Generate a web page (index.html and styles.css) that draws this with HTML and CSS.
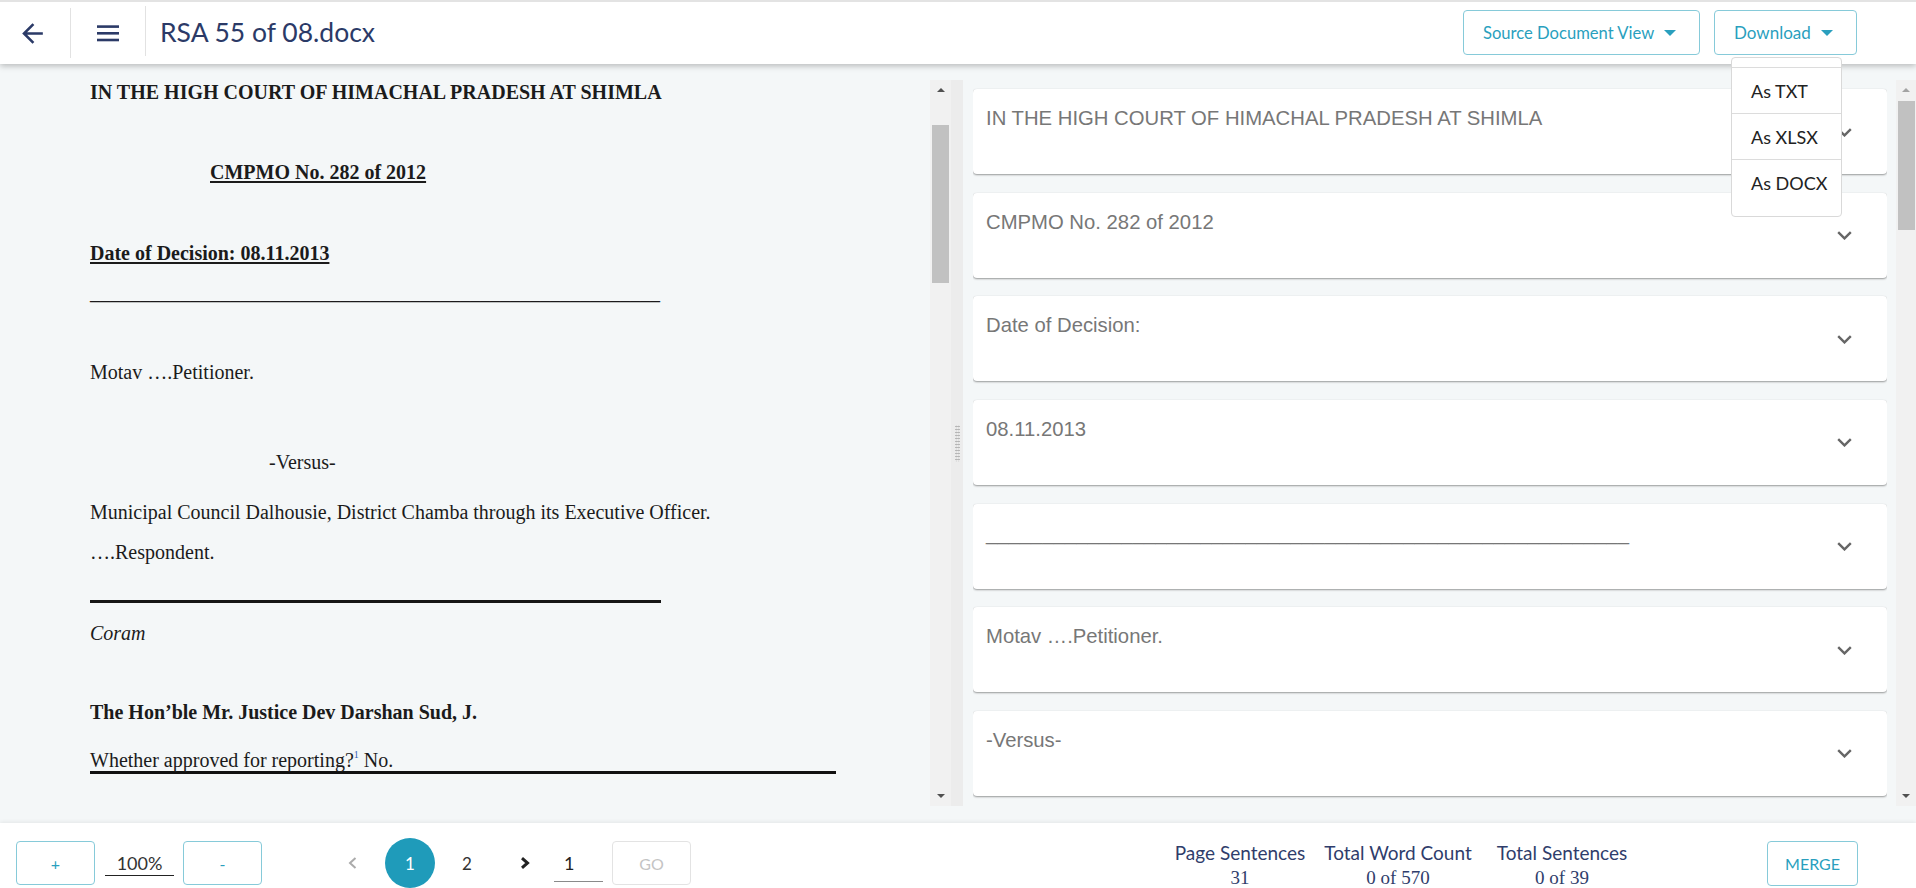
FILE: index.html
```html
<!DOCTYPE html>
<html lang="en">
<head>
<meta charset="utf-8">
<title>RSA 55 of 08.docx</title>
<link rel="stylesheet" href="styles.css">
</head>
<body>
<header class="topbar">
  <button class="icon-btn back-btn" aria-label="Back">
    <svg width="31" height="31" viewBox="0 0 24 24"><path d="M20 11H7.83l5.59-5.59L12 4l-8 8 8 8 1.41-1.41L7.83 13H20v-2z" fill="#2b3a67"/></svg>
  </button>
  <span class="vsep"></span>
  <button class="icon-btn menu-btn" aria-label="Menu">
    <svg width="22" height="17" viewBox="0 0 22 17"><rect x="0" y="0.3" width="22" height="2.6" fill="#2b3a67"/><rect x="0" y="7" width="22" height="2.6" fill="#2b3a67"/><rect x="0" y="13.7" width="22" height="2.6" fill="#2b3a67"/></svg>
  </button>
  <span class="vsep vsep-2"></span>
  <h1 class="doc-title">RSA 55 of 08.docx</h1>
  <div class="topbar-spacer"></div>
  <button class="outline-btn view-btn">Source Document View
    <svg class="caret" width="12" height="6" viewBox="0 0 12 6"><polygon points="0,0 12,0 6,6" fill="#2a9fbe"/></svg>
  </button>
  <div class="download-wrap">
    <button class="outline-btn download-btn">Download
      <svg class="caret" width="12" height="6" viewBox="0 0 12 6"><polygon points="0,0 12,0 6,6" fill="#2a9fbe"/></svg>
    </button>
    <ul class="download-menu">
      <li>As TXT</li>
      <li>As XLSX</li>
      <li>As DOCX</li>
    </ul>
  </div>
</header>

<main class="workspace">
  <section class="doc-pane">
    <div class="doc-scroll">
      <article class="doc">
        <p class="b p-first">IN THE HIGH COURT OF HIMACHAL PRADESH AT SHIMLA</p>
        <p class="b u p-case">CMPMO No. 282 of 2012</p>
        <p class="b u p-date">Date of Decision: 08.11.2013</p>
        <p class="p-rule">_________________________________________________________</p>
        <p class="p-motav">Motav ….Petitioner.</p>
        <p class="p-versus">-Versus-</p>
        <p class="p-muni">Municipal Council Dalhousie, District Chamba through its Executive Officer.</p>
        <p class="p-resp">….Respondent.</p>
        <div class="thick-rule"></div>
        <p class="i p-coram">Coram</p>
        <p class="b p-judge">The Hon’ble Mr. Justice Dev Darshan Sud, J.</p>
        <p class="p-whether">Whether approved for reporting?<sup class="fn">1</sup> No.</p>
      </article>
    </div>
    <div class="scrollbar">
      <div class="sb-btn"><span class="tri-up"></span></div>
      <div class="sb-track">
        <div class="sb-thumb" style="margin-top:25px;height:158px"></div>
      </div>
      <div class="sb-btn"><span class="tri-down"></span></div>
    </div>
  </section>

  <div class="splitter"><span class="grip"></span></div>

  <section class="sent-pane">
    <div class="cards">
      <div class="card"><span class="card-text">IN THE HIGH COURT OF HIMACHAL PRADESH AT SHIMLA</span><svg class="chev" width="15" height="9" viewBox="0 0 15 9"><polyline points="1.2,1.2 7.5,7.4 13.8,1.2" fill="none" stroke="#666" stroke-width="2.4"/></svg></div>
      <div class="card"><span class="card-text">CMPMO No. 282 of 2012</span><svg class="chev" width="15" height="9" viewBox="0 0 15 9"><polyline points="1.2,1.2 7.5,7.4 13.8,1.2" fill="none" stroke="#666" stroke-width="2.4"/></svg></div>
      <div class="card"><span class="card-text">Date of Decision:</span><svg class="chev" width="15" height="9" viewBox="0 0 15 9"><polyline points="1.2,1.2 7.5,7.4 13.8,1.2" fill="none" stroke="#666" stroke-width="2.4"/></svg></div>
      <div class="card"><span class="card-text">08.11.2013</span><svg class="chev" width="15" height="9" viewBox="0 0 15 9"><polyline points="1.2,1.2 7.5,7.4 13.8,1.2" fill="none" stroke="#666" stroke-width="2.4"/></svg></div>
      <div class="card"><span class="card-text">_________________________________________________________</span><svg class="chev" width="15" height="9" viewBox="0 0 15 9"><polyline points="1.2,1.2 7.5,7.4 13.8,1.2" fill="none" stroke="#666" stroke-width="2.4"/></svg></div>
      <div class="card"><span class="card-text">Motav ….Petitioner.</span><svg class="chev" width="15" height="9" viewBox="0 0 15 9"><polyline points="1.2,1.2 7.5,7.4 13.8,1.2" fill="none" stroke="#666" stroke-width="2.4"/></svg></div>
      <div class="card"><span class="card-text">-Versus-</span><svg class="chev" width="15" height="9" viewBox="0 0 15 9"><polyline points="1.2,1.2 7.5,7.4 13.8,1.2" fill="none" stroke="#666" stroke-width="2.4"/></svg></div>
    </div>
    <div class="scrollbar scrollbar-right">
      <div class="sb-btn"><span class="tri-up light"></span></div>
      <div class="sb-track">
        <div class="sb-thumb" style="margin-top:1px;height:129px"></div>
      </div>
      <div class="sb-btn"><span class="tri-down"></span></div>
    </div>
  </section>
</main>

<footer class="bottombar">
  <button class="outline-btn zoom-btn">+</button>
  <span class="zoom-value">100%</span>
  <button class="outline-btn zoom-btn zoom-minus">-</button>

  <button class="page-arrow prev" aria-label="Previous">
    <svg width="9" height="12" viewBox="0 0 9 12"><polyline points="7.5,1 2,6 7.5,11" fill="none" stroke="#ababab" stroke-width="2"/></svg>
  </button>
  <span class="page-num current">1</span>
  <span class="page-num">2</span>
  <button class="page-arrow next" aria-label="Next">
    <svg width="10" height="12" viewBox="0 0 10 12"><polyline points="2,1.2 7.5,6 2,10.8" fill="none" stroke="#222" stroke-width="3"/></svg>
  </button>
  <span class="page-input">1</span>
  <button class="go-btn">GO</button>

  <div class="footer-spacer"></div>

  <div class="stat stat-1"><span class="stat-label">Page Sentences</span><span class="stat-value">31</span></div>
  <div class="stat stat-2"><span class="stat-label">Total Word Count</span><span class="stat-value">0 of 570</span></div>
  <div class="stat stat-3"><span class="stat-label">Total Sentences</span><span class="stat-value">0 of 39</span></div>

  <button class="outline-btn merge-btn">MERGE</button>
</footer>
</body>
</html>
```
FILE: styles.css
```css
* { box-sizing: border-box; }
html, body { margin: 0; padding: 0; }
body {
  width: 1916px;
  height: 888px;
  overflow: hidden;
  background: #f4f7f8;
  font-family: "Lato", "Open Sans", sans-serif;
  display: flex;
  flex-direction: column;
}
button { font-family: inherit; cursor: pointer; }

/* ---------- top bar ---------- */
.topbar {
  position: relative;
  z-index: 5;
  height: 64px;
  flex: none;
  display: flex;
  align-items: center;
  background: #fff;
  border-top: 2px solid #e3e3e3;
  box-shadow: 0 2px 6px rgba(0,0,0,0.25);
}
.icon-btn {
  background: none;
  border: 0;
  padding: 0;
  display: flex;
  align-items: center;
  justify-content: center;
}
.back-btn { margin-left: 17px; width: 31px; height: 31px; }
.vsep { width: 1px; height: 50px; background: #e2e2e2; margin-left: 22px; }
.menu-btn { margin-left: 26px; width: 22px; height: 17px; margin-top: 1px; }
.vsep-2 { margin-left: 26px; margin-top: -4px; }
.doc-title {
  margin: 0 0 0 14px;
  font-weight: 400;
  font-size: 26.5px;
  color: #2b3a67;
  line-height: 1;
  margin-top: -2px;
}
.topbar-spacer { flex: 1; }
.outline-btn {
  background: #fff;
  border: 1px solid #86cad9;
  border-radius: 4px;
  color: #2a9fbe;
  font-size: 17px;
  display: flex;
  align-items: center;
  justify-content: center;
}
.view-btn, .download-btn {
  height: 45px;
  padding: 0 0 0 19px;
  justify-content: flex-start;
  margin-top: -1px;
}
.view-btn { width: 237px; font-size: 16.6px; }
.download-btn { width: 143px; }
.caret { margin-left: 10px; margin-top: 1px; }
.download-wrap { position: relative; margin-left: 14px; margin-right: 59px; }
.download-menu {
  position: absolute;
  top: 46px;
  left: 17px;
  width: 111px;
  margin: 0;
  padding: 9px 0 11px;
  list-style: none;
  background: #fff;
  border: 1px solid #d9d9d9;
  border-radius: 4px;
  z-index: 10;
}
.download-menu li {
  height: 46px;
  border-top: 1px solid #dcdcdc;
  display: flex;
  align-items: center;
  padding-left: 19px;
  font-size: 18px;
  color: #222;
}

/* ---------- workspace ---------- */
.workspace {
  flex: none;
  height: 759px;
  display: flex;
  padding: 16px 0 17px 0;
  background: #f4f7f8;
}
.doc-pane { display: flex; flex: none; }
.doc-scroll {
  width: 930px;
  height: 726px;
  overflow: hidden;
}
.doc {
  padding-left: 90px;
  font-family: "Liberation Serif", "Times New Roman", serif;
  font-size: 20px;
  line-height: 24px;
  color: #1b1b1b;
}
.doc p { margin: 0; white-space: nowrap; }
.doc .b { font-weight: 700; }
.doc .u { text-decoration: underline; text-underline-offset: 2px; }
.doc .i { font-style: italic; }
.p-first { margin-top: 0; }
.doc .p-case { margin-top: 56px; padding-left: 120px; }
.doc .p-date { margin-top: 57px; }
.doc .p-rule { margin-top: 15px; }
.doc .p-motav { margin-top: 56px; }
.doc .p-versus { margin-top: 66px; padding-left: 179px; }
.doc .p-muni { margin-top: 26px; }
.doc .p-resp { margin-top: 16px; }
.thick-rule { margin-top: 36px; width: 571px; height: 3px; background: #161616; }
.doc .p-coram { margin-top: 18px; }
.doc .p-judge { margin-top: 55px; }
.doc .p-whether {
  margin-top: 25px;
  width: 746px;
  line-height: 22px;
  border-bottom: 3px solid #111;
}
.fn { color: #2b5fb8; font-size: 10px; vertical-align: 9px; line-height: 0; }

/* scrollbars */
.scrollbar {
  width: 21px;
  height: 726px;
  background: #f1f1f1;
  display: flex;
  flex-direction: column;
  align-items: center;
}
.scrollbar-right { width: 20px; margin-left: 9px; }
.sb-btn {
  height: 20px;
  width: 100%;
  flex: none;
  display: flex;
  align-items: center;
  justify-content: center;
}
.tri-up, .tri-down { width: 0; height: 0; border-left: 4px solid transparent; border-right: 4px solid transparent; }
.tri-up { border-bottom: 4px solid #505050; }
.tri-up.light { border-bottom-color: #a3a3a3; }
.tri-down { border-top: 4px solid #505050; }
.sb-track { flex: 1; width: 100%; display: flex; flex-direction: column; align-items: center; }
.sb-thumb { width: 17px; background: #c1c1c1; }

.splitter {
  width: 12px;
  height: 726px;
  flex: none;
  background: #ececec;
  display: flex;
  align-items: flex-start;
  justify-content: center;
}
.grip {
  margin-top: 345px;
  width: 5px;
  height: 37px;
  background-image: radial-gradient(circle, #b3b3b3 0.8px, transparent 1.1px);
  background-size: 2.5px 3px;
}

.sent-pane { flex: 1; display: flex; margin-left: 10px; }
.cards {
  flex: 1;
  height: 726px;
  overflow: hidden;
  padding-top: 9px;
  display: flex;
  flex-direction: column;
  gap: 18.67px;
}
.card {
  flex: none;
  height: 85px;
  background: #fff;
  border-radius: 4px;
  box-shadow: 0 1px 2px rgba(0,0,0,0.38), 0 0 1px rgba(0,0,0,0.08);
  display: flex;
  align-items: center;
  padding: 0 35px 0 13px;
}
.card-text {
  flex: 1;
  align-self: flex-start;
  padding-top: 18px;
  font-family: "Liberation Sans", Arial, sans-serif;
  font-size: 20.3px;
  line-height: 23px;
  color: #777;
  white-space: nowrap;
}
.chev { flex: none; margin-top: 1px; }

/* ---------- bottom bar ---------- */
.bottombar {
  position: relative;
  z-index: 4;
  flex: 1;
  background: #fff;
  box-shadow: 0 -1px 4px rgba(0,0,0,0.07);
  display: flex;
  align-items: flex-start;
  padding-top: 18px;
}
.zoom-btn {
  width: 79px;
  height: 44px;
  font-size: 16px;
  margin-left: 16px;
  padding: 0;
}
.zoom-minus { margin-left: 9px; }
.zoom-value {
  margin-left: 10px;
  margin-top: 10px;
  width: 69px;
  text-align: center;
  font-size: 18px;
  line-height: 24px;
  color: #333;
  border-bottom: 1px solid #222;
}
.page-arrow {
  background: none;
  border: 0;
  width: 30px;
  height: 44px;
  padding: 0;
  display: flex;
  align-items: center;
  justify-content: center;
}
.page-arrow.prev { margin-left: 75px; }
.page-arrow.next { margin-left: 18px; }
.page-num {
  width: 50px;
  height: 44px;
  display: flex;
  align-items: center;
  justify-content: center;
  font-size: 17px;
  color: #333;
  margin-left: 7px;
}
.page-num.current {
  margin-left: 18px;
  margin-top: -3px;
  height: 50px;
  border-radius: 50%;
  background: #1f9bba;
  color: #fff;
}
.page-input {
  margin-left: 14px;
  margin-top: 10px;
  width: 49px;
  padding-left: 10px;
  font-size: 18px;
  line-height: 24px;
  padding-bottom: 6px;
  color: #222;
  border-bottom: 1px solid #8a8a8a;
}
.go-btn {
  margin-left: 9px;
  width: 79px;
  height: 44px;
  background: #fff;
  border: 1px solid #e3e3e3;
  border-radius: 4px;
  color: #c4c4c4;
  font-size: 16px;
  padding: 0;
}
.footer-spacer { flex: 1; }
.stat {
  display: flex;
  flex-direction: column;
  align-items: center;
  margin-top: 2px;
}
.stat-1 { width: 150px; }
.stat-2 { width: 166px; }
.stat-3 { width: 162px; }
.stat-label {
  font-size: 19px;
  line-height: 20px;
  color: #2f3d6b;
  white-space: nowrap;
}
.stat-value {
  margin-top: 7px;
  font-family: "Liberation Serif", "Times New Roman", serif;
  font-size: 19px;
  line-height: 16px;
  color: #2f3d6b;
  white-space: nowrap;
}
.merge-btn {
  margin-left: 124px;
  margin-right: 58px;
  width: 91px;
  height: 45px;
  font-size: 16px;
  padding: 0;
}
```
